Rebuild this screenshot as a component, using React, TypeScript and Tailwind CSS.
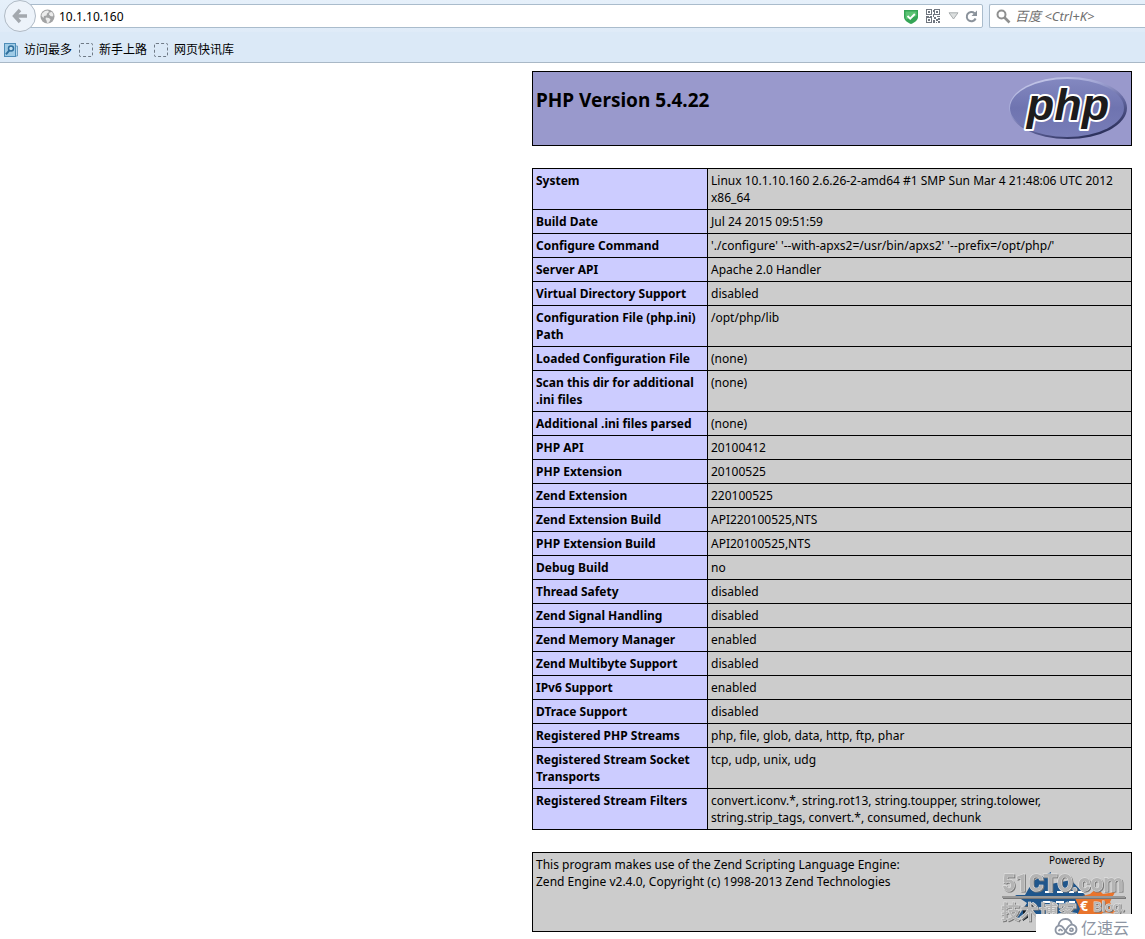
type InfoRow = {
  label: string
  value: string
}

const INFO_ROWS: InfoRow[] = [
  { label: 'System', value: 'Linux 10.1.10.160 2.6.26-2-amd64 #1 SMP Sun Mar 4 21:48:06 UTC 2012 x86_64' },
  { label: 'Build Date', value: 'Jul 24 2015 09:51:59' },
  { label: 'Configure Command', value: "'./configure' '--with-apxs2=/usr/bin/apxs2' '--prefix=/opt/php/'" },
  { label: 'Server API', value: 'Apache 2.0 Handler' },
  { label: 'Virtual Directory Support', value: 'disabled' },
  { label: 'Configuration File (php.ini) Path', value: '/opt/php/lib' },
  { label: 'Loaded Configuration File', value: '(none)' },
  { label: 'Scan this dir for additional .ini files', value: '(none)' },
  { label: 'Additional .ini files parsed', value: '(none)' },
  { label: 'PHP API', value: '20100412' },
  { label: 'PHP Extension', value: '20100525' },
  { label: 'Zend Extension', value: '220100525' },
  { label: 'Zend Extension Build', value: 'API220100525,NTS' },
  { label: 'PHP Extension Build', value: 'API20100525,NTS' },
  { label: 'Debug Build', value: 'no' },
  { label: 'Thread Safety', value: 'disabled' },
  { label: 'Zend Signal Handling', value: 'disabled' },
  { label: 'Zend Memory Manager', value: 'enabled' },
  { label: 'Zend Multibyte Support', value: 'disabled' },
  { label: 'IPv6 Support', value: 'enabled' },
  { label: 'DTrace Support', value: 'disabled' },
  { label: 'Registered PHP Streams', value: 'php, file, glob, data, http, ftp, phar' },
  { label: 'Registered Stream Socket Transports', value: 'tcp, udp, unix, udg' },
  {
    label: 'Registered Stream Filters',
    value: 'convert.iconv.*, string.rot13, string.toupper, string.tolower, string.strip_tags, convert.*, consumed, dechunk'
  }
]

export default function App() {
  return (
    <div className="relative min-h-screen bg-white font-['Noto_Sans','Noto_Sans_CJK_SC',sans-serif] text-xs leading-[17px] text-black">
      <BrowserChrome />
      <main className="flex justify-end pt-2 pr-[13px] pb-[7px]">
        <div className="flex w-full max-w-[600px] flex-col gap-[22px]">
          <div className="flex items-start justify-between border border-black bg-[#9999cc] px-[3px] py-[3px]">
            <h1 className="pt-[13px] text-[19px] leading-6 font-bold">PHP Version 5.4.22</h1>
            <a
              aria-label="PHP"
              href="#php"
            >
              <PhpLogo />
            </a>
          </div>
          <table className="w-full border-collapse">
            <tbody>
              {INFO_ROWS.map((row) => (
                <tr key={row.label}>
                  <th
                    className="w-[175px] border border-black bg-[#ccccff] p-[3px] text-left align-top font-bold"
                    scope="row"
                  >
                    {row.label}
                  </th>
                  <td className="border border-black bg-[#cccccc] p-[3px] align-top">{row.value}</td>
                </tr>
              ))}
            </tbody>
          </table>
          <div className="flex h-20 items-start justify-between border border-black bg-[#cccccc]">
            <p className="p-[3px]">
              This program makes use of the Zend Scripting Language Engine:
              <br />
              Zend Engine v2.4.0, Copyright (c) 1998-2013 Zend Technologies
            </p>
            <ZendLogo />
          </div>
        </div>
      </main>
      <div className="absolute right-0 bottom-0 flex h-[25px] w-[109px] items-center gap-[3px] bg-white pl-[18px] font-['Noto_Sans_CJK_SC',sans-serif] text-[16px] leading-6 text-[#8d95a3]">
        <CloudMark />
        <span className="whitespace-nowrap">亿速云</span>
      </div>
    </div>
  )
}

function BrowserChrome() {
  return (
    <header className="border-b border-[#a9b8c6] bg-[#dbe9f7]">
      <div className="flex h-8 items-center bg-linear-to-b from-[#e6f0fa] to-[#dfebf8] pl-1">
        <button
          aria-label="Back"
          className="z-10 flex size-8 shrink-0 items-center justify-center rounded-full border border-[#b0bac5] bg-[#edf3fa]"
          type="button"
        >
          <svg
            aria-hidden="true"
            className="size-4"
            viewBox="0 0 16 16"
          >
            <path
              d="M8 2 2.5 8 8 14M3 8h12"
              fill="none"
              stroke="#a3a8ae"
              strokeWidth="3.4"
            />
          </svg>
        </button>
        <form className="-ml-2 flex h-6 min-w-0 flex-1 items-center rounded-r-xs border border-[#aabccc] bg-white pr-1 pl-[11px]">
          <GlobeIcon />
          <input
            aria-label="Address"
            className="ml-1 min-w-0 flex-1 bg-transparent outline-none"
            defaultValue="10.1.10.160"
            type="text"
          />
          <div className="flex items-center gap-[6px]">
            <ShieldIcon />
            <QrIcon />
            <svg
              aria-hidden="true"
              className="h-2 w-[11px]"
              viewBox="0 0 11 8"
            >
              <path
                d="M1 .8h9L5.500 7z"
                fill="#dcdfdf"
                stroke="#a9adae"
              />
            </svg>
            <button
              aria-label="Reload"
              type="button"
            >
              <svg
                aria-hidden="true"
                className="size-[13px]"
                viewBox="0 0 13 13"
              >
                <path
                  d="M9.500 3.300A4.600 4.600 0 1 0 10.600 8.500"
                  fill="none"
                  stroke="#8a929b"
                  strokeWidth="2"
                />
                <path
                  d="M12 .5V6H6.500z"
                  fill="#8a929b"
                />
              </svg>
            </button>
          </div>
        </form>
        <form className="ml-1.5 flex h-6 w-[156px] shrink-0 items-center gap-1 rounded-l-xs border border-r-0 border-[#aabccc] bg-white pl-[6px]">
          <svg
            aria-hidden="true"
            className="size-[15px] shrink-0"
            viewBox="0 0 15 15"
          >
            <circle
              cx="5.500"
              cy="5.500"
              fill="none"
              r="4"
              stroke="#8f9090"
              strokeWidth="2"
            />
            <path
              d="m8.500 8.500 5 5"
              stroke="#8f9090"
              strokeWidth="2.600"
            />
          </svg>
          <input
            aria-label="Search"
            className="w-full min-w-0 bg-transparent text-[13px] italic outline-none placeholder:text-[#6f6f6f]"
            placeholder="百度 <Ctrl+K>"
            type="text"
          />
        </form>
      </div>
      <nav
        aria-label="Bookmarks"
        className="flex h-[30px] items-center gap-[7px] pt-[5px] pl-1"
      >
        <a
          className="flex items-center gap-[5px]"
          href="#most-visited"
        >
          <MostVisitedIcon />
          访问最多
        </a>
        <a
          className="flex items-center gap-[6px]"
          href="#getting-started"
        >
          <EmptyFavicon />
          新手上路
        </a>
        <a
          className="flex items-center gap-[6px]"
          href="#web-slices"
        >
          <EmptyFavicon />
          网页快讯库
        </a>
      </nav>
    </header>
  )
}

function GlobeIcon() {
  return (
    <svg
      aria-hidden="true"
      className="size-[15px] shrink-0"
      viewBox="0 0 15 15"
    >
      <circle
        cx="7.500"
        cy="7.500"
        fill="#a2a3a4"
        r="7"
      />
      <path
        d="M2 4.500 5 2l3-.5 1 1.500-2 1.500-.5 2L4 7 3.500 9 1.500 7zM9.500 3.500l2.500-.5 1.500 3-1 1.500-2-.5-1.500-1.500zM6 8.500l3 .5 1.500 1.500-1.500 3-2 .5-.5-2.500-1-1.500z"
        fill="#ececec"
      />
    </svg>
  )
}

function ShieldIcon() {
  return (
    <svg
      aria-hidden="true"
      className="h-[15px] w-[14px]"
      viewBox="0 0 14 15"
    >
      <path
        d="M0 1h14v7c0 3.500-3.500 5.500-7 7-3.500-1.500-7-3.500-7-7z"
        fill="#35a556"
      />
      <path
        d="M1.500 2.500h11V7L2 10.500 1.500 8z"
        fill="#5cc374"
      />
      <path
        d="m3.500 7 2.700 2.700L10.800 5"
        fill="none"
        stroke="#fff"
        strokeWidth="1.800"
      />
    </svg>
  )
}

function QrIcon() {
  return (
    <svg
      aria-hidden="true"
      className="mx-[2px] size-[14px]"
      shapeRendering="crispEdges"
      viewBox="0 0 14 14"
    >
      <path
        d="M.5.5h5v5h-5zM8.500.5h5v5h-5zM.5 8.500h5v5h-5z"
        fill="none"
        stroke="#70767f"
      />
      <path
        d="M2 2h2v2H2zM10 2h2v2h-2zM2 10h2v2H2zM7 1h1v2H7zM7 5h1v3H7zM0 7h3v1H0zM4 7h2v1H4zM8 8h2v2H8zM11 7h3v1h-3zM12 9h2v2h-2zM10 10h2v2h-2zM7 11h2v3H7zM10 13h1v1h-1zM12 12h2v2h-2z"
        fill="#70767f"
      />
    </svg>
  )
}

function MostVisitedIcon() {
  return (
    <svg
      aria-hidden="true"
      className="h-4 w-[15px]"
      viewBox="0 0 15 16"
    >
      <path
        d="M11 4h2.500v10H6"
        fill="#b9d9ee"
        stroke="#6ea0c2"
      />
      <rect
        fill="#9fcbe6"
        height="13"
        stroke="#4d8db8"
        width="11"
        x=".5"
        y="1.500"
      />
      <circle
        cx="7"
        cy="6.500"
        fill="#c3e0f1"
        r="2.500"
        stroke="#2f6f9d"
        strokeWidth="1.500"
      />
      <path
        d="m5.300 8.300-3.300 4"
        stroke="#2f6f9d"
        strokeWidth="2"
      />
    </svg>
  )
}

function EmptyFavicon() {
  return <span className="size-[14px] rounded-xs border border-dashed border-[#6f7a86]" />
}

function PhpLogo() {
  return (
    <svg
      className="h-[67px] w-[120px]"
      viewBox="0 0 120 67"
    >
      <defs>
        <linearGradient
          id="php-rim"
          x1="0.2"
          x2="0.8"
          y1="0"
          y2="1"
        >
          <stop
            offset="0"
            stopColor="#c9cceb"
          />
          <stop
            offset="0.3"
            stopColor="#a3a7d6"
          />
          <stop
            offset="0.6"
            stopColor="#6367a0"
          />
          <stop
            offset="1"
            stopColor="#20244c"
          />
        </linearGradient>
        <linearGradient
          id="php-face"
          x1="0"
          x2="0"
          y1="0"
          y2="1"
        >
          <stop
            offset="0"
            stopColor="#8388c0"
          />
          <stop
            offset="0.5"
            stopColor="#6f74b0"
          />
          <stop
            offset="1"
            stopColor="#787db8"
          />
        </linearGradient>
      </defs>
      <ellipse
        cx="60"
        cy="33"
        fill="url(#php-rim)"
        rx="59"
        ry="31"
      />
      <ellipse
        cx="59"
        cy="33"
        fill="url(#php-face)"
        rx="57"
        ry="29"
      />
      <text
        className="font-['Liberation_Sans',sans-serif] text-[45px] font-bold italic"
        fill="#1d1b1c"
        paintOrder="stroke"
        stroke="#fff"
        strokeLinejoin="round"
        strokeWidth="4"
        textAnchor="middle"
        x="60"
        y="45"
      >
        php
      </text>
    </svg>
  )
}

function ZendLogo() {
  return (
    <svg
      className="h-[78px] w-[132px] shrink-0"
      viewBox="0 0 132 78"
    >
      <text
        className="font-['Noto_Sans',sans-serif] text-[10px]"
        x="50"
        y="11"
      >
        Powered By
      </text>
      <path
        d="M16 42h10l8-14 8-4 10-5v12l20-4 14 15 5 19H34l-16 4 10-15z"
        fill="#1f568c"
      />
      <path
        d="m76 45 15-4 7-6 6 6 12-2-5 10 6 12-12-2-8 6-12-3-8 3 4-9z"
        fill="#e9742c"
      />
      <path
        d="m24 54 12-3-6 13-6 4z"
        fill="#101820"
      />
      <path
        d="M46 39h8M58 39h6M70 39h5M79 39h6M44 49h7M57 49h8M70 49h6"
        fill="none"
        stroke="#fff"
        strokeWidth="2"
      />
      <text
        className="font-['Noto_Sans',sans-serif] text-[14px] font-bold"
        fill="#fff"
        x="81"
        y="58"
      >
        €
      </text>
      <g
        className="drop-shadow-[1px_1px_0_#777777]"
        fill="#b4b4b4"
        paintOrder="stroke"
        stroke="#e4e4e4"
        strokeWidth="1"
      >
        <text
          className="font-['Roboto',sans-serif] text-[23px] font-bold"
          x="3"
          y="38"
        >
          51CTO.com
        </text>
        <path
          d="M3 44h123"
          stroke="#989898"
          strokeWidth="2"
        />
        <text
          className="font-['Noto_Sans_CJK_SC',sans-serif] text-[19px] font-medium"
          x="2"
          y="66"
        >
          技术博客
        </text>
        <text
          className="font-['Noto_Sans',sans-serif] text-[13px] font-medium"
          x="94"
          y="58"
        >
          Blog.
        </text>
      </g>
    </svg>
  )
}

function CloudMark() {
  return (
    <svg
      aria-hidden="true"
      className="h-[18px] w-6 shrink-0"
      viewBox="0 0 24 18"
    >
      <g
        fill="none"
        stroke="#8d95a3"
        strokeLinecap="round"
        strokeWidth="1.800"
      >
        <path d="M10 15.500c-2 1.500-8.500 1.500-8.500-3.500 0-4 4-5.500 6.500-3.500 2 1.600 3 4.500 5.500 6.500 3.500 2.500 9 1 9-3.500 0-4-4-6-7-4-2.500 1.700-3.500 5-5.500 8" />
        <path d="M4.500 7C5 3.500 8 1 11.500 1c3 0 5.500 2 6.300 5M5 12.500c.5-1.500 2-1.500 3 0M16 12.500c1 1.200 3 .8 3-.8s-2-1.800-3-.7" />
      </g>
    </svg>
  )
}
